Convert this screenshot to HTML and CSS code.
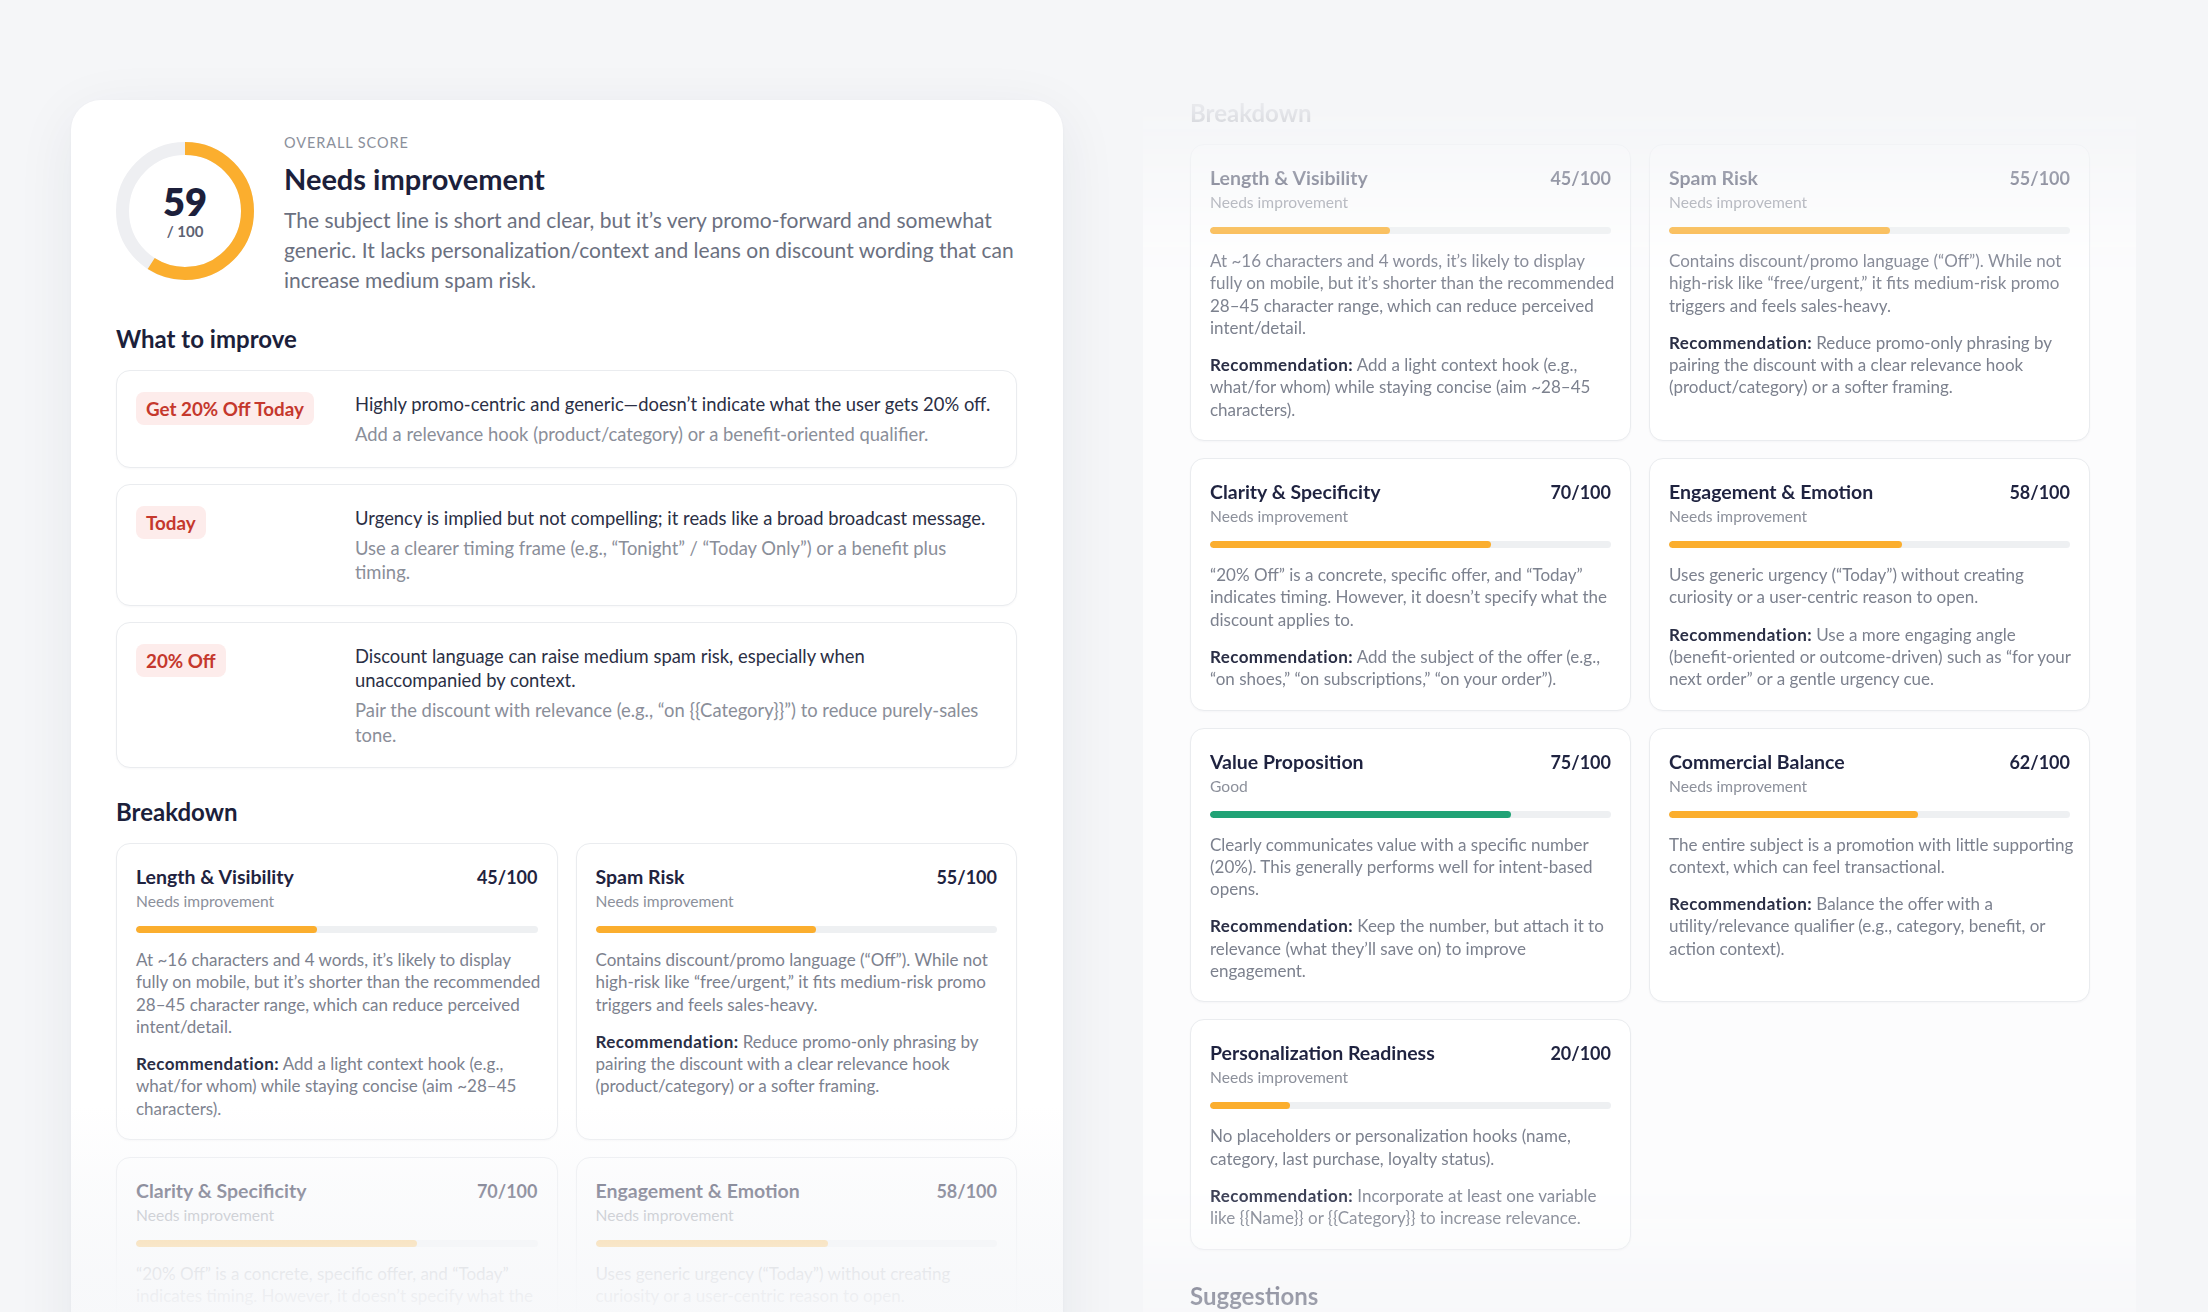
FILE: index.html
```html
<!DOCTYPE html>
<html lang="en">
<head>
<meta charset="utf-8">
<title>Subject line score</title>
<link rel="stylesheet" href="styles.css">
</head>
<body>
<div class="stage">
  <section class="report">
    <header class="overall">
      <div class="gauge">
        <svg viewBox="0 0 138 138" width="138" height="138" aria-hidden="true">
          <circle class="gauge-track" cx="69" cy="69" r="62.5"/>
          <circle class="gauge-fill" cx="69" cy="69" r="62.5" stroke-dasharray="231.7 392.7" transform="rotate(-90 69 69)"/>
        </svg>
        <div class="gauge-label"><span class="gauge-score">59</span><span class="gauge-max">/ 100</span></div>
      </div>
      <div class="overall-text">
        <div class="eyebrow">Overall score</div>
        <h1>Needs improvement</h1>
        <p>The subject line is short and clear, but it’s very promo-forward and somewhat generic. It lacks personalization/context and leans on discount wording that can increase medium spam risk.</p>
      </div>
    </header>

    <h2 class="section">What to improve</h2>
    <ul class="improve-list">
      <li class="improve-item">
        <span class="tag">Get 20% Off Today</span>
        <div>
          <p class="improve-issue">Highly promo-centric and generic—doesn’t indicate what the user gets 20% off.</p>
          <p class="improve-fix">Add a relevance hook (product/category) or a benefit-oriented qualifier.</p>
        </div>
      </li>
      <li class="improve-item">
        <span class="tag">Today</span>
        <div>
          <p class="improve-issue">Urgency is implied but not compelling; it reads like a broad broadcast message.</p>
          <p class="improve-fix">Use a clearer timing frame (e.g., “Tonight” / “Today Only”) or a benefit plus timing.</p>
        </div>
      </li>
      <li class="improve-item">
        <span class="tag">20% Off</span>
        <div>
          <p class="improve-issue">Discount language can raise medium spam risk, especially when unaccompanied by context.</p>
          <p class="improve-fix">Pair the discount with relevance (e.g., “on {{Category}}”) to reduce purely-sales tone.</p>
        </div>
      </li>
    </ul>

    <h2 class="section">Breakdown</h2>
    <div class="metric-grid">
      <article class="metric">
        <div class="metric-head"><h3>Length &amp; Visibility</h3><span class="metric-score">45/100</span></div>
        <div class="metric-status">Needs improvement</div>
        <div class="bar"><span class="bar-fill" style="width:45%"></span></div>
        <p class="metric-body">At ~16 characters and 4 words, it’s likely to display fully on mobile, but it’s shorter than the recommended 28–45 character range, which can reduce perceived intent/detail.</p>
        <p class="metric-body rec"><strong>Recommendation:</strong> Add a light context hook (e.g., what/for whom) while staying concise (aim ~28–45 characters).</p>
      </article>
      <article class="metric">
        <div class="metric-head"><h3>Spam Risk</h3><span class="metric-score">55/100</span></div>
        <div class="metric-status">Needs improvement</div>
        <div class="bar"><span class="bar-fill" style="width:55%"></span></div>
        <p class="metric-body">Contains discount/promo language (“Off”). While not high-risk like “free/urgent,” it fits medium-risk promo triggers and feels sales-heavy.</p>
        <p class="metric-body rec"><strong>Recommendation:</strong> Reduce promo-only phrasing by pairing the discount with a clear relevance hook (product/category) or a softer framing.</p>
      </article>
      <article class="metric">
        <div class="metric-head"><h3>Clarity &amp; Specificity</h3><span class="metric-score">70/100</span></div>
        <div class="metric-status">Needs improvement</div>
        <div class="bar"><span class="bar-fill" style="width:70%"></span></div>
        <p class="metric-body">“20% Off” is a concrete, specific offer, and “Today” indicates timing. However, it doesn’t specify what the discount applies to.</p>
        <p class="metric-body rec"><strong>Recommendation:</strong> Add the subject of the offer (e.g., “on shoes,” “on subscriptions,” “on your order”).</p>
      </article>
      <article class="metric">
        <div class="metric-head"><h3>Engagement &amp; Emotion</h3><span class="metric-score">58/100</span></div>
        <div class="metric-status">Needs improvement</div>
        <div class="bar"><span class="bar-fill" style="width:58%"></span></div>
        <p class="metric-body">Uses generic urgency (“Today”) without creating curiosity or a user-centric reason to open.</p>
        <p class="metric-body rec"><strong>Recommendation:</strong> Use a more engaging angle (benefit-oriented or outcome-driven) such as “for your next order” or a gentle urgency cue.</p>
      </article>
    </div>
  </section>

  <section class="panel">
    <h2 class="section panel-title">Breakdown</h2>
    <div class="metric-grid">
      <article class="metric">
        <div class="metric-head"><h3>Length &amp; Visibility</h3><span class="metric-score">45/100</span></div>
        <div class="metric-status">Needs improvement</div>
        <div class="bar"><span class="bar-fill" style="width:45%"></span></div>
        <p class="metric-body">At ~16 characters and 4 words, it’s likely to display fully on mobile, but it’s shorter than the recommended 28–45 character range, which can reduce perceived intent/detail.</p>
        <p class="metric-body rec"><strong>Recommendation:</strong> Add a light context hook (e.g., what/for whom) while staying concise (aim ~28–45 characters).</p>
      </article>
      <article class="metric">
        <div class="metric-head"><h3>Spam Risk</h3><span class="metric-score">55/100</span></div>
        <div class="metric-status">Needs improvement</div>
        <div class="bar"><span class="bar-fill" style="width:55%"></span></div>
        <p class="metric-body">Contains discount/promo language (“Off”). While not high-risk like “free/urgent,” it fits medium-risk promo triggers and feels sales-heavy.</p>
        <p class="metric-body rec"><strong>Recommendation:</strong> Reduce promo-only phrasing by pairing the discount with a clear relevance hook (product/category) or a softer framing.</p>
      </article>
      <article class="metric">
        <div class="metric-head"><h3>Clarity &amp; Specificity</h3><span class="metric-score">70/100</span></div>
        <div class="metric-status">Needs improvement</div>
        <div class="bar"><span class="bar-fill" style="width:70%"></span></div>
        <p class="metric-body">“20% Off” is a concrete, specific offer, and “Today” indicates timing. However, it doesn’t specify what the discount applies to.</p>
        <p class="metric-body rec"><strong>Recommendation:</strong> Add the subject of the offer (e.g., “on shoes,” “on subscriptions,” “on your order”).</p>
      </article>
      <article class="metric">
        <div class="metric-head"><h3>Engagement &amp; Emotion</h3><span class="metric-score">58/100</span></div>
        <div class="metric-status">Needs improvement</div>
        <div class="bar"><span class="bar-fill" style="width:58%"></span></div>
        <p class="metric-body">Uses generic urgency (“Today”) without creating curiosity or a user-centric reason to open.</p>
        <p class="metric-body rec"><strong>Recommendation:</strong> Use a more engaging angle (benefit-oriented or outcome-driven) such as “for your next order” or a gentle urgency cue.</p>
      </article>
      <article class="metric">
        <div class="metric-head"><h3>Value Proposition</h3><span class="metric-score">75/100</span></div>
        <div class="metric-status">Good</div>
        <div class="bar"><span class="bar-fill good" style="width:75%"></span></div>
        <p class="metric-body">Clearly communicates value with a specific number (20%). This generally performs well for intent-based opens.</p>
        <p class="metric-body rec"><strong>Recommendation:</strong> Keep the number, but attach it to relevance (what they’ll save on) to improve engagement.</p>
      </article>
      <article class="metric">
        <div class="metric-head"><h3>Commercial Balance</h3><span class="metric-score">62/100</span></div>
        <div class="metric-status">Needs improvement</div>
        <div class="bar"><span class="bar-fill" style="width:62%"></span></div>
        <p class="metric-body">The entire subject is a promotion with little supporting context, which can feel transactional.</p>
        <p class="metric-body rec"><strong>Recommendation:</strong> Balance the offer with a utility/relevance qualifier (e.g., category, benefit, or action context).</p>
      </article>
      <article class="metric">
        <div class="metric-head"><h3>Personalization Readiness</h3><span class="metric-score">20/100</span></div>
        <div class="metric-status">Needs improvement</div>
        <div class="bar"><span class="bar-fill" style="width:20%"></span></div>
        <p class="metric-body">No placeholders or personalization hooks (name, category, last purchase, loyalty status).</p>
        <p class="metric-body rec"><strong>Recommendation:</strong> Incorporate at least one variable like {{Name}} or {{Category}} to increase relevance.</p>
      </article>
    </div>
    <h2 class="section suggestions">Suggestions</h2>
  </section>
</div>
</body>
</html>
```

FILE: styles.css
```css
* { box-sizing: border-box; }

html, body {
  margin: 0;
  width: 2208px;
  height: 1312px;
  overflow: hidden;
}

body {
  background: #f5f6f8;
  font-family: Lato, "Noto Sans", "Open Sans", sans-serif;
  color: #1e2140;
  -webkit-font-smoothing: antialiased;
}

h1, h2, h3, p, ul { margin: 0; padding: 0; }
ul { list-style: none; }

.stage {
  display: flex;
  align-items: flex-start;
  gap: 80px;
  padding-left: 71px;
}

/* ---------- left report card ---------- */
.report {
  position: relative;
  flex: none;
  width: 992px;
  margin-top: 100px;
  padding: 33px 46px 60px 45px;
  background: #ffffff;
  border-radius: 30px;
  box-shadow: 0 14px 60px rgba(30, 40, 70, 0.07), 0 1px 3px rgba(30, 40, 70, 0.04);
}

.report::after {
  content: "";
  position: absolute;
  left: 0;
  right: 0;
  top: 1005px;
  bottom: 0;
  border-radius: 0 0 30px 30px;
  background: linear-gradient(rgba(247, 248, 250, 0) 0, rgba(247, 248, 250, 0.5) 80px, rgba(247, 248, 250, 0.88) 170px, #f7f8fa 230px);
}

.overall {
  display: flex;
  gap: 30px;
}

.gauge {
  flex: none;
  display: grid;
  place-items: center;
  width: 138px;
  height: 138px;
  margin-top: 9px;
}

.gauge > * { grid-area: 1 / 1; }

.gauge circle {
  fill: none;
  stroke-width: 13;
}

.gauge-track { stroke: #eeeff2; }
.gauge-fill { stroke: #fbae2e; }

.gauge-label {
  display: flex;
  flex-direction: column;
  align-items: center;
}

.gauge-score {
  font-size: 38px;
  line-height: 40px;
  font-weight: 800;
  color: #1c1f3b;
}

.gauge-max {
  font-size: 15px;
  line-height: 20px;
  font-weight: 700;
  color: #5d6272;
}

.eyebrow {
  font-size: 14.5px;
  line-height: 19px;
  letter-spacing: 0.9px;
  text-transform: uppercase;
  color: #8b909b;
}

.overall h1 {
  margin-top: 10px;
  font-size: 29px;
  line-height: 34px;
  font-weight: 700;
  color: #1c1f3b;
}

.overall p {
  margin-top: 9px;
  font-size: 21px;
  line-height: 30px;
  color: #6b7080;
}

.section {
  margin: 29px 0 16px;
  font-size: 24px;
  line-height: 30px;
  font-weight: 700;
  color: #1c1f3b;
}

/* ---------- improvement list ---------- */
.improve-list {
  display: flex;
  flex-direction: column;
  gap: 16px;
}

.improve-item {
  display: grid;
  grid-template-columns: 199px 1fr;
  column-gap: 20px;
  align-items: start;
  padding: 21px 21px 20px 19px;
  border: 1px solid #eaecef;
  border-radius: 14px;
  background: #ffffff;
  box-shadow: 0 1px 2px rgba(20, 30, 60, 0.03);
}

.tag {
  justify-self: start;
  height: 33px;
  padding: 0 10px;
  line-height: 33px;
  font-size: 18.8px;
  font-weight: 700;
  color: #c5382d;
  background: #fdeceb;
  border-radius: 8px;
}

.improve-issue {
  font-size: 18.4px;
  line-height: 24.5px;
  color: #2b2f45;
}

.improve-fix {
  margin-top: 5.5px;
  font-size: 18.4px;
  line-height: 24.5px;
  color: #8a8e99;
}

/* ---------- metric cards ---------- */
.metric-grid {
  display: grid;
  grid-template-columns: 1fr 1fr;
  gap: 17px 18px;
}

.metric {
  padding: 21px 19px 19px;
  border: 1px solid #eaecef;
  border-radius: 14px;
  background: #ffffff;
  box-shadow: 0 1px 2px rgba(20, 30, 60, 0.03);
}

.metric-head {
  display: flex;
  justify-content: space-between;
  align-items: baseline;
}

.metric h3 {
  font-size: 19.5px;
  line-height: 24px;
  font-weight: 700;
  color: #1f2340;
}

.metric-score {
  font-size: 18px;
  line-height: 24px;
  font-weight: 700;
  color: #1f2340;
}

.metric-status {
  margin-top: 2px;
  font-size: 15.6px;
  line-height: 20px;
  color: #8c909b;
}

.bar {
  margin-top: 15px;
  height: 7px;
  border-radius: 4px;
  background: #eef0f2;
  overflow: hidden;
}

.bar-fill {
  display: block;
  height: 100%;
  border-radius: 4px;
  background: #fbae2e;
}

.bar-fill.good { background: #21a376; }

.metric-body {
  margin: 16px -8px 0 0;
  font-size: 17px;
  line-height: 22.3px;
  color: #7c818e;
}

.metric-body.rec { margin-top: 15px; }

.metric-body strong {
  font-weight: 700;
  letter-spacing: 0.4px;
  color: #2a2e45;
}

/* ---------- right panel ---------- */
.panel {
  flex: none;
  width: 993px;
  margin-top: 80px;
  padding: 18px 46px 80px 47px;
  background: #fcfcfd;
  -webkit-mask-image: linear-gradient(to bottom, rgba(0,0,0,0) 0, rgba(0,0,0,0.08) 33px, rgba(0,0,0,0.42) 96px, rgba(0,0,0,0.88) 175px, #000 230px, #000 1085px, rgba(0,0,0,0.8) 1150px, rgba(0,0,0,0.42) 1215px, rgba(0,0,0,0.3) 1300px);
  mask-image: linear-gradient(to bottom, rgba(0,0,0,0) 0, rgba(0,0,0,0.08) 33px, rgba(0,0,0,0.42) 96px, rgba(0,0,0,0.88) 175px, #000 230px, #000 1085px, rgba(0,0,0,0.8) 1150px, rgba(0,0,0,0.42) 1215px, rgba(0,0,0,0.3) 1300px);
}

.panel-title { margin-top: 0; }

.suggestions { margin-top: 31px; }
```
